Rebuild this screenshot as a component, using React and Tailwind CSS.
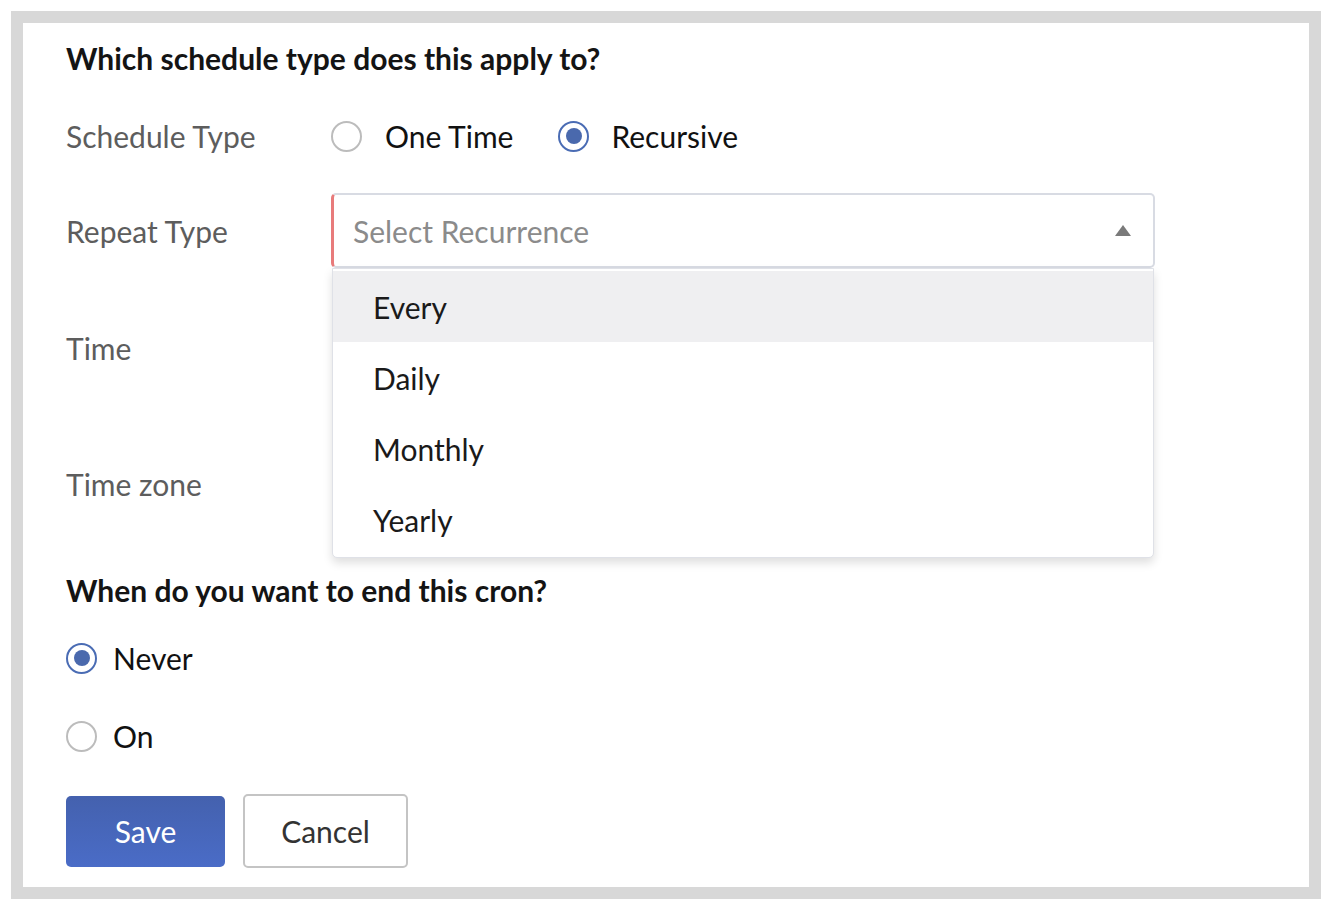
import { useState } from "react";

const font = { fontFamily: "Lato, 'Noto Sans', sans-serif" };

function Radio({ checked }) {
  return (
    <span
      className={`flex h-[31px] w-[31px] shrink-0 items-center justify-center rounded-full border-2 bg-white ${
        checked ? "border-[#4a6cb4]" : "border-[#bcbcbc]"
      }`}
    >
      {checked ? <span className="h-[16px] w-[16px] rounded-full bg-[#4a69ad]" /> : null}
    </span>
  );
}

function FieldRow({ label, className, children }) {
  return (
    <div className={`flex items-center ${className}`}>
      <div className="w-[265px] shrink-0 text-[30px] leading-[36px] text-[#5d5d5d]">{label}</div>
      {children}
    </div>
  );
}

const options = ["Every", "Daily", "Monthly", "Yearly"];

export default function App() {
  const [active] = useState(0);

  return (
    <div className="bg-white p-[11px]" style={font}>
      <div className="h-[888px] w-[1310px] border-[12px] border-[#d8d8d8] bg-white">
        <div className="pl-[43px] pt-[17px]">
          <h2 className="text-[30px] font-bold leading-[36px] text-[#141414]">
            Which schedule type does this apply to?
          </h2>

          <FieldRow label="Schedule Type" className="mt-[30px] h-[60px]">
            <label className="flex items-center">
              <Radio />
              <span className="ml-[23px] text-[30px] leading-[36px] text-[#111]">One Time</span>
            </label>
            <label className="ml-[45px] flex items-center">
              <Radio checked />
              <span className="ml-[22px] text-[30px] leading-[36px] text-[#111]">Recursive</span>
            </label>
          </FieldRow>

          <FieldRow label="Repeat Type" className="mt-[27px] h-[75px]">
            <div className="relative">
              <div className="flex h-[75px] w-[824px] items-center justify-between rounded-[5px] border-2 border-l-[3px] border-[#d8dbe3] border-l-[#e87b7b] pl-[19px] pr-[22px]">
                <span className="text-[30px] leading-[36px] text-[#8b8b8b]">Select Recurrence</span>
                <svg width="16" height="11" viewBox="0 0 16 11">
                  <polygon points="8,0 16,11 0,11" fill="#7a7a7a" />
                </svg>
              </div>
              <ul className="absolute left-[1px] top-[75px] z-10 w-[822px] rounded-b-[5px] border border-[#dfe1e7] bg-white py-[2px] shadow-[0_5px_10px_rgba(0,0,0,0.13)]">
                {options.map((option, index) => (
                  <li
                    key={option}
                    className={`flex h-[71px] items-center pl-[40px] text-[30px] leading-[36px] text-[#1a1a1a] ${
                      index === active ? "bg-[#efeff1]" : ""
                    }`}
                  >
                    {option}
                  </li>
                ))}
              </ul>
            </div>
          </FieldRow>

          <FieldRow label="Time" className="mt-[42px] h-[75px]" />
          <FieldRow label="Time zone" className="mt-[61px] h-[75px]" />

          <h2 className="mt-[51px] text-[30px] font-bold leading-[36px] text-[#141414]">
            When do you want to end this cron?
          </h2>

          <label className="mt-[30px] flex h-[40px] items-center">
            <Radio checked />
            <span className="ml-[16px] text-[30px] leading-[36px] text-[#111]">Never</span>
          </label>
          <label className="mt-[38px] flex h-[40px] items-center">
            <Radio />
            <span className="ml-[16px] text-[30px] leading-[36px] text-[#111]">On</span>
          </label>

          <div className="mt-[38px] flex items-center gap-[18px]">
            <button
              type="button"
              className="h-[71px] w-[159px] rounded-[5px] bg-gradient-to-b from-[#4461ae] to-[#4a6cc7] text-[30px] text-white"
            >
              Save
            </button>
            <button
              type="button"
              className="h-[74px] w-[165px] rounded-[5px] border-2 border-[#c4c4c4] bg-white text-[30px] text-[#333]"
            >
              Cancel
            </button>
          </div>
        </div>
      </div>
    </div>
  );
}
